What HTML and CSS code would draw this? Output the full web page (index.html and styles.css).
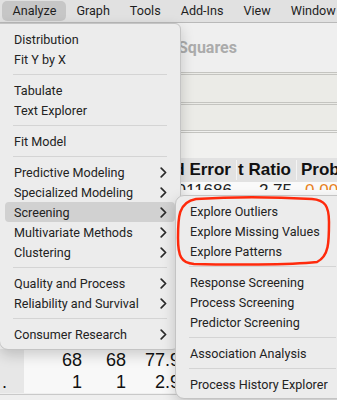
FILE: index.html
```html
<!DOCTYPE html>
<html>
<head>
<meta charset="utf-8">
<link rel="stylesheet" href="styles.css">
</head>
<body>
<div class="window">
  <div class="menubar">
    <span class="mb-item active">Analyze</span>
    <span class="mb-item">Graph</span>
    <span class="mb-item">Tools</span>
    <span class="mb-item">Add-Ins</span>
    <span class="mb-item">View</span>
    <span class="mb-item">Window</span>
  </div>
  <div class="content">
    <div class="title">Squares</div>
    <div class="band b1"></div>
    <div class="band b2"></div>
    <div class="band b3"></div>
    <div class="thead">
      <div class="c1">Std Error</div>
      <div class="c2">t Ratio</div>
      <div class="c3">Prob</div>
    </div>
    <div class="trow">
      <div class="c1">0.011686</div>
      <div class="c2">2.75</div>
      <div class="c3 orange">0.00</div>
    </div>
    <div class="filler"></div>
    <div class="srow">
      <div class="lab"></div><div class="n n1">68</div><div class="n n2">68</div><div class="n n3">77.9</div>
    </div>
    <div class="srow">
      <div class="lab">.</div><div class="n n1">1</div><div class="n n2">1</div><div class="n n3">2.9</div>
    </div>
    <div class="next">Effect Tests</div>
  </div>
</div>

<div class="menu main">
  <div class="item">Distribution</div>
  <div class="item">Fit Y by X</div>
  <div class="sep"></div>
  <div class="item">Tabulate</div>
  <div class="item">Text Explorer</div>
  <div class="sep"></div>
  <div class="item">Fit Model</div>
  <div class="sep"></div>
  <div class="item">Predictive Modeling<svg class="chev" viewBox="0 0 7 11"><path d="M1.2 1.2 L5.6 5.5 L1.2 9.8"/></svg></div>
  <div class="item">Specialized Modeling<svg class="chev" viewBox="0 0 7 11"><path d="M1.2 1.2 L5.6 5.5 L1.2 9.8"/></svg></div>
  <div class="item sel">Screening<svg class="chev" viewBox="0 0 7 11"><path d="M1.2 1.2 L5.6 5.5 L1.2 9.8"/></svg></div>
  <div class="item">Multivariate Methods<svg class="chev" viewBox="0 0 7 11"><path d="M1.2 1.2 L5.6 5.5 L1.2 9.8"/></svg></div>
  <div class="item">Clustering<svg class="chev" viewBox="0 0 7 11"><path d="M1.2 1.2 L5.6 5.5 L1.2 9.8"/></svg></div>
  <div class="sep"></div>
  <div class="item">Quality and Process<svg class="chev" viewBox="0 0 7 11"><path d="M1.2 1.2 L5.6 5.5 L1.2 9.8"/></svg></div>
  <div class="item">Reliability and Survival<svg class="chev" viewBox="0 0 7 11"><path d="M1.2 1.2 L5.6 5.5 L1.2 9.8"/></svg></div>
  <div class="sep"></div>
  <div class="item">Consumer Research<svg class="chev" viewBox="0 0 7 11"><path d="M1.2 1.2 L5.6 5.5 L1.2 9.8"/></svg></div>
</div>

<div class="menu sub">
  <div class="item">Explore Outliers</div>
  <div class="item">Explore Missing Values</div>
  <div class="item">Explore Patterns</div>
  <div class="sep"></div>
  <div class="item">Response Screening</div>
  <div class="item">Process Screening</div>
  <div class="item">Predictor Screening</div>
  <div class="sep"></div>
  <div class="item">Association Analysis</div>
  <div class="sep"></div>
  <div class="item">Process History Explorer</div>
</div>

<svg class="circle" viewBox="0 0 158 74" width="158" height="74">
  <path d="M22 5 C55 3 100 3 138 5 C151 6 155 12 155 28 C155 48 155 62 143 68 C115 71 55 71 20 70 C7 69 4 62 4 44 C4 24 4 8 22 5 Z"/>
</svg>
</body>
</html>
```

FILE: styles.css
```css
html, body {
  margin: 0;
  padding: 0;
}
body {
  width: 337px;
  height: 400px;
  overflow: hidden;
  position: relative;
  font-family: "Liberation Sans", Arial, sans-serif;
  background: #eeeeee;
}
.window {
  width: 337px;
  height: 400px;
  display: flex;
  flex-direction: column;
}
.menubar {
  height: 22px;
  flex: 0 0 22px;
  background: #e1e1e1;
  border-bottom: 1px solid #b9b9b9;
  display: flex;
  align-items: center;
  padding-left: 2px;
  font-family: Roboto, "Noto Sans", sans-serif;
  font-size: 12.6px;
  color: #1e1e1e;
  white-space: nowrap;
}
.mb-item {
  height: 20px;
  line-height: 20px;
  padding: 0 9.5px 0 10.5px;
  border-radius: 5px;
}
.mb-item.active {
  background: #c6c6c6;
}
.content {
  flex: 1;
  display: flex;
  flex-direction: column;
  background: #efefef;
}
.title {
  height: 49px;
  padding-left: 178px;
  display: flex;
  align-items: center;
  font-weight: bold;
  font-size: 16px;
  color: #ababab;
  font-family: Roboto, "Noto Sans", sans-serif;
}
.band {
  border-top: 3px double #c4c4c0;
  background: #ebebe7;
}
.b1 { height: 27px; }
.b2 { height: 25px; }
.b3 { height: 25px; background: #f1f1ef; }
.thead, .trow {
  display: grid;
  grid-template-columns: 237px 60px 1fr;
  font-size: 17px;
  white-space: nowrap;
}
.thead {
  height: 24px;
  background: #e2e2e2;
  font-weight: bold;
  color: #111;
  align-items: center;
}
.thead > div {
  border-right: 1px solid #f4f4f4;
  padding-right: 5px;
  text-align: right;
  overflow: hidden;
}
.thead .c3 { text-align: left; padding-left: 4px; border-right: 0; }
.trow {
  height: 8px;
  overflow: hidden;
  background: #fafafa;
  line-height: 18px;
  color: #222;
}
.trow > div {
  text-align: right;
  padding-right: 5px;
  overflow: hidden;
}
.trow .c3 { text-align: left; padding-left: 8px; }
.orange { color: #e8821e; }
.filler {
  height: 159px;
  background: #fafafa;
}
.srow {
  height: 22px;
  display: flex;
  align-items: center;
  font-size: 18px;
  color: #111;
  background: #f8f8f8;
}
.srow .lab {
  width: 24px;
  height: 22px;
  background: #e7e7e7;
  line-height: 22px;
  padding-left: 2px;
  box-sizing: border-box;
}
.srow .n { text-align: right; }
.srow .n1 { width: 58px; }
.srow .n2 { width: 44px; }
.srow .n3 { width: 54px; }
.next {
  border-top: 1px solid #c9c9c9;
  margin-top: 1px;
  padding: 3px 0 0 14px;
  font-weight: bold;
  font-size: 17px;
  color: #222;
}

.menu {
  position: absolute;
  background: #ececec;
  border: 1px solid #c4c4c4;
  box-shadow: 0 5px 14px rgba(0,0,0,0.18);
  font-family: Roboto, "Noto Sans", sans-serif;
  font-size: 12.6px;
  color: #232323;
  box-sizing: border-box;
}
.main {
  left: -1px;
  top: 23px;
  width: 182px;
  padding: 5px 0;
  border-radius: 0 6px 9px 9px;
}
.sub {
  left: 175px;
  top: 195px;
  width: 175px;
  padding: 5px 0 4px;
  border-radius: 9px 0 0 9px;
}
.item {
  height: 20px;
  display: flex;
  align-items: center;
  justify-content: space-between;
  margin: 0 5px;
  padding: 0 8px 0 9px;
  border-radius: 4px;
  white-space: nowrap;
}
.item.sel {
  background: #d1d1d1;
}
.chev {
  width: 7px;
  height: 11px;
}
.chev path {
  fill: none;
  stroke: #2a2a2a;
  stroke-width: 1.7;
  stroke-linecap: round;
  stroke-linejoin: round;
}
.sep {
  height: 1px;
  margin: 5px 13px;
  background: #d4d4d4;
}
.circle {
  position: absolute;
  left: 174px;
  top: 194px;
}
.circle path {
  fill: none;
  stroke: #ff2a0c;
  stroke-width: 2.5;
}
```
